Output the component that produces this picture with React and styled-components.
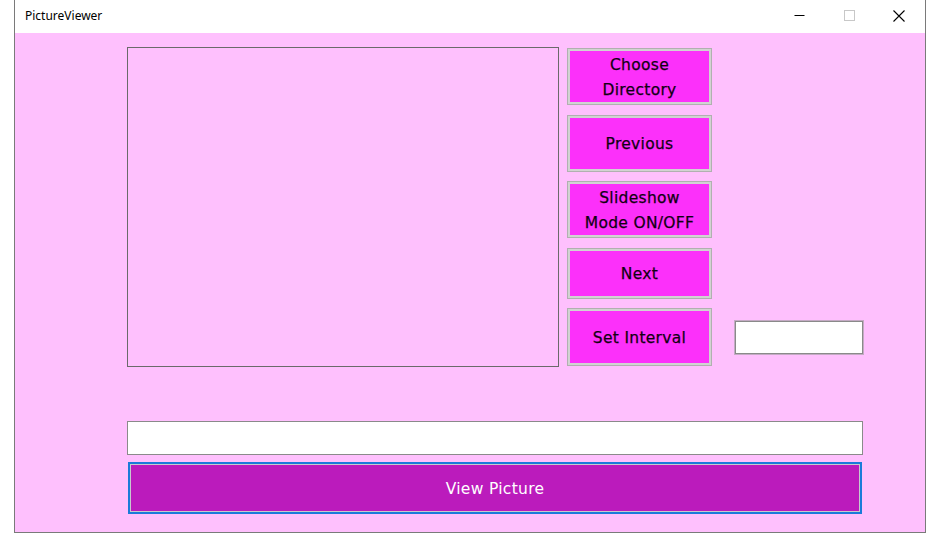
import React from "react";
import styled, { createGlobalStyle } from "styled-components";

const Global = createGlobalStyle`
  html, body { margin: 0; padding: 0; background: #fff; }
  * { box-sizing: border-box; }
`;

const sideButtons = [
  { label: ["Choose", "Directory"], h: 57 },
  { label: ["Previous"], h: 57 },
  { label: ["Slideshow", "Mode ON/OFF"], h: 57 },
  { label: ["Next"], h: 51 },
  { label: ["Set Interval"], h: 58 },
];

export default function App() {
  return (
    <Screen>
      <Global />
      <Window>
        <TitleBar>
          <Title>PictureViewer</Title>
          <Caption>
            <CapBtn>
              <svg width="11" height="11" viewBox="0 0 11 11">
                <line x1="0.5" y1="5.5" x2="10.5" y2="5.5" stroke="#000" strokeWidth="1" />
              </svg>
            </CapBtn>
            <CapBtn>
              <svg width="11" height="11" viewBox="0 0 11 11">
                <rect x="0.5" y="0.5" width="10" height="10" fill="none" stroke="#c8c8c8" strokeWidth="1" />
              </svg>
            </CapBtn>
            <CapBtn>
              <svg width="12" height="12" viewBox="0 0 12 12">
                <path d="M0.5 0.5 L11.5 11.5 M11.5 0.5 L0.5 11.5" stroke="#000" strokeWidth="1.1" />
              </svg>
            </CapBtn>
          </Caption>
        </TitleBar>
        <Client>
          <TopGrid>
            <Picture />
            {sideButtons.map((b, i) => (
              <SideButton key={i} $h={b.h}>
                {b.label.map((l, j) => (
                  <span key={j}>{l}</span>
                ))}
              </SideButton>
            ))}
            <IntervalBox />
          </TopGrid>
          <PathBox />
          <ViewButton>View Picture</ViewButton>
        </Client>
      </Window>
    </Screen>
  );
}

const Screen = styled.div`
  width: 934px;
  height: 542px;
  background: #fff;
  overflow: hidden;
`;

const Window = styled.div`
  margin-left: 14px;
  width: 912px;
  height: 533px;
  border-left: 1px solid #7a7a7a;
  border-right: 1px solid #7a7a7a;
  border-bottom: 1px solid #7a7a7a;
  display: flex;
  flex-direction: column;
`;

const TitleBar = styled.div`
  height: 33px;
  background: #fff;
  display: flex;
  align-items: center;
  justify-content: space-between;
  padding-left: 10px;
`;

const Title = styled.div`
  font-family: "Noto Sans", "Open Sans", sans-serif;
  font-size: 12px;
  color: #000;
  margin-top: -2px;
`;

const Caption = styled.div`
  display: flex;
  height: 100%;
  margin-right: 1px;
`;

const CapBtn = styled.div`
  width: 50px;
  height: 100%;
  display: flex;
  align-items: center;
  justify-content: center;
  padding-bottom: 2px;
`;

const Client = styled.div`
  flex: 1;
  background: #fec0fd;
  padding: 15px 0 0 112px;
`;

const TopGrid = styled.div`
  display: grid;
  grid-template-columns: 432px 145px auto;
  grid-template-rows: 57px 57px 57px 51px 58px;
  column-gap: 8px;
  row-gap: 9.5px;
`;

const Picture = styled.div`
  grid-column: 1;
  grid-row: 1 / span 5;
  margin: -1px 0;
  border: 1px solid #6a6a6a;
`;

const SideButton = styled.button`
  grid-column: 2;
  height: ${p => p.$h}px;
  background: #fc30fa;
  border: 1px solid #b0b0b0;
  box-shadow: inset 0 0 0 2px #d2d2d2;
  padding: 3px 0 0;
  display: flex;
  flex-direction: column;
  align-items: center;
  justify-content: center;
  font-family: "DejaVu Sans", sans-serif;
  font-size: 15.5px;
  line-height: 25px;
  color: #120012;
  letter-spacing: 0.3px;
  -webkit-text-stroke: 0.25px #120012;
`;

const IntervalBox = styled.div`
  grid-column: 3;
  grid-row: 5;
  align-self: center;
  margin-left: 15px;
  margin-top: 1px;
  width: 128px;
  height: 33px;
  background: #fff;
  border: 1px solid #8a8a8a;
  box-shadow: 0 0 0 1px #c4aac4;
`;

const PathBox = styled.div`
  margin-top: 55px;
  width: 736px;
  height: 34px;
  background: #fff;
  border: 1px solid #8a8a8a;
`;

const ViewButton = styled.button`
  display: flex;
  align-items: center;
  justify-content: center;
  margin: 7px 0 0 1px;
  width: 734px;
  height: 52px;
  background: #bb1bbc;
  border: 2px solid #1a7bd9;
  box-shadow: inset 0 0 0 1px #c8c8d0;
  color: #fff;
  font-family: "DejaVu Sans", sans-serif;
  font-size: 15.5px;
  letter-spacing: 0.3px;
  padding: 2px 0 0;
`;
